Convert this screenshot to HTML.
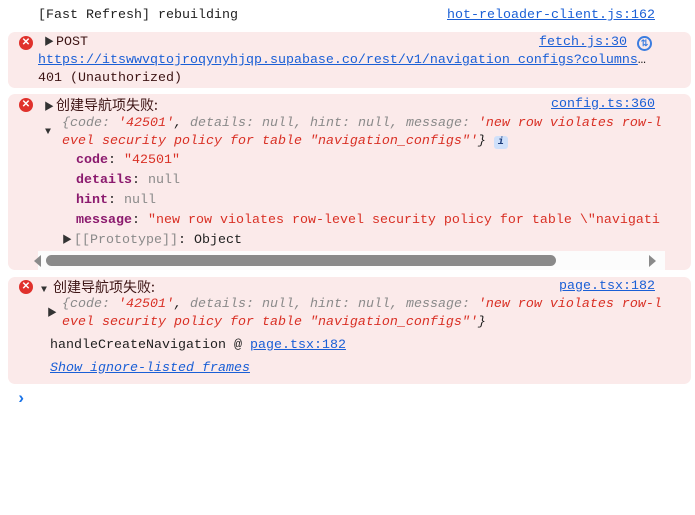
<!DOCTYPE html>
<html><head><meta charset="utf-8"><style>
body{margin:0;width:695px;height:515px;background:#fff;position:relative;overflow:hidden;font-family:"Liberation Mono","Noto Sans CJK SC",monospace;font-size:13.33px;color:#1f1f1f}
.l{position:absolute;white-space:nowrap;line-height:18px}
.box{position:absolute;left:8px;width:683px;background:#fbeaea;border-radius:7px}
a{color:#1a5fd6;text-decoration:underline}
.err{color:#3c1414}
.x{position:absolute;width:14px;height:14px;border-radius:50%;background:#e0312c;color:#fff;font:bold 10px/14px "Liberation Sans",sans-serif;text-align:center}
.tri{display:inline-block;width:12px;font-size:10px;color:#333}
.i{font-style:italic}
.g{color:#8a8a8a}.r{color:#d93025}.k{color:#8b1a6e;font-weight:bold}
.cjk{font-family:"Noto Sans CJK SC",sans-serif;font-size:14px}
</style></head><body>
<div class="l" style="left:38px;top:7px">[Fast Refresh] rebuilding</div>
<div class="l" style="left:447px;top:7px"><a>hot-reloader-client.js:162</a></div>

<div class="box" style="top:32px;height:56px"></div>
<div class="x" style="left:19px;top:36px">✕</div>
<div class="l err" style="left:44px;top:34px"><span class="tri">▶</span>POST</div>
<div class="l" style="left:539px;top:34px"><a>fetch.js:30</a></div>
<div style="position:absolute;left:637px;top:36px;width:15px;height:15px;border-radius:50%;border:2px solid #3b7de0;box-sizing:border-box;color:#3b7de0;font:bold 9px/11px sans-serif;text-align:center">⇅</div>
<div class="l" style="left:38px;top:52px"><a>https://itswwvqtojroqynyhjqp.supabase.co/rest/v1/navigation_configs?columns</a>…</div>
<div class="l err" style="left:38px;top:70px">401 (Unauthorized)</div>

<div class="box" style="top:94px;height:176px"></div>
<div class="x" style="left:19px;top:98px">✕</div>
<div class="l err" style="left:44px;top:96px"><span class="tri">▶</span><span class="cjk">创建导航项失败:</span></div>
<div class="l" style="left:551px;top:96px"><a>config.ts:360</a></div>
<div class="l tri" style="left:45px;top:124px">▼</div>
<div class="l i" style="left:62px;top:115px"><span class="g">{code:</span> <span class="r">'42501'</span>, <span class="g">details: null, hint: null, message:</span> <span class="r">'new row violates row-l</span></div>
<div class="l i" style="left:62px;top:133px"><span class="r">evel security policy for table "navigation_configs"'</span>} <span style="display:inline-block;width:14px;height:13px;background:#cfe0fa;border-radius:3px;font-size:10px;line-height:13px;text-align:center;font-style:italic;font-weight:bold;color:#1a3a7a">i</span></div>
<div class="l" style="left:76px;top:152px"><span class="k">code</span>: <span class="r">"42501"</span></div>
<div class="l" style="left:76px;top:172px"><span class="k">details</span>: <span class="g">null</span></div>
<div class="l" style="left:76px;top:192px"><span class="k">hint</span>: <span class="g">null</span></div>
<div class="l" style="left:76px;top:212px"><span class="k">message</span>: <span class="r">"new row violates row-level security policy for table \"navigati</span></div>
<div class="l" style="left:62px;top:232px"><span class="tri">▶</span><span class="g">[[Prototype]]</span>: Object</div>
<div style="position:absolute;left:38px;top:251px;width:627px;height:19px;background:#fcfcfc"></div>
<div style="position:absolute;left:46px;top:255px;width:510px;height:11px;background:#8a8a8a;border-radius:6px"></div>
<div style="position:absolute;left:34px;top:255px;width:0;height:0;border-top:6px solid transparent;border-bottom:6px solid transparent;border-right:7px solid #8a8a8a"></div>
<div style="position:absolute;left:649px;top:255px;width:0;height:0;border-top:6px solid transparent;border-bottom:6px solid transparent;border-left:7px solid #8a8a8a"></div>

<div class="box" style="top:277px;height:107px"></div>
<div class="x" style="left:19px;top:280px">✕</div>
<div class="l err" style="left:41px;top:278px"><span class="tri">▼</span><span class="cjk">创建导航项失败:</span></div>
<div class="l" style="left:559px;top:278px"><a>page.tsx:182</a></div>
<div class="l tri" style="left:47px;top:306px">▶</div>
<div class="l i" style="left:62px;top:296px"><span class="g">{code:</span> <span class="r">'42501'</span>, <span class="g">details: null, hint: null, message:</span> <span class="r">'new row violates row-l</span></div>
<div class="l i" style="left:62px;top:314px"><span class="r">evel security policy for table "navigation_configs"'</span>}</div>
<div class="l" style="left:50px;top:337px">handleCreateNavigation @ <a>page.tsx:182</a></div>
<div class="l i" style="left:50px;top:360px"><a>Show ignore-listed frames</a></div>

<div class="l" style="left:16px;top:391px;color:#1a73e8;font-weight:bold;font-size:17px">›</div>
</body></html>
